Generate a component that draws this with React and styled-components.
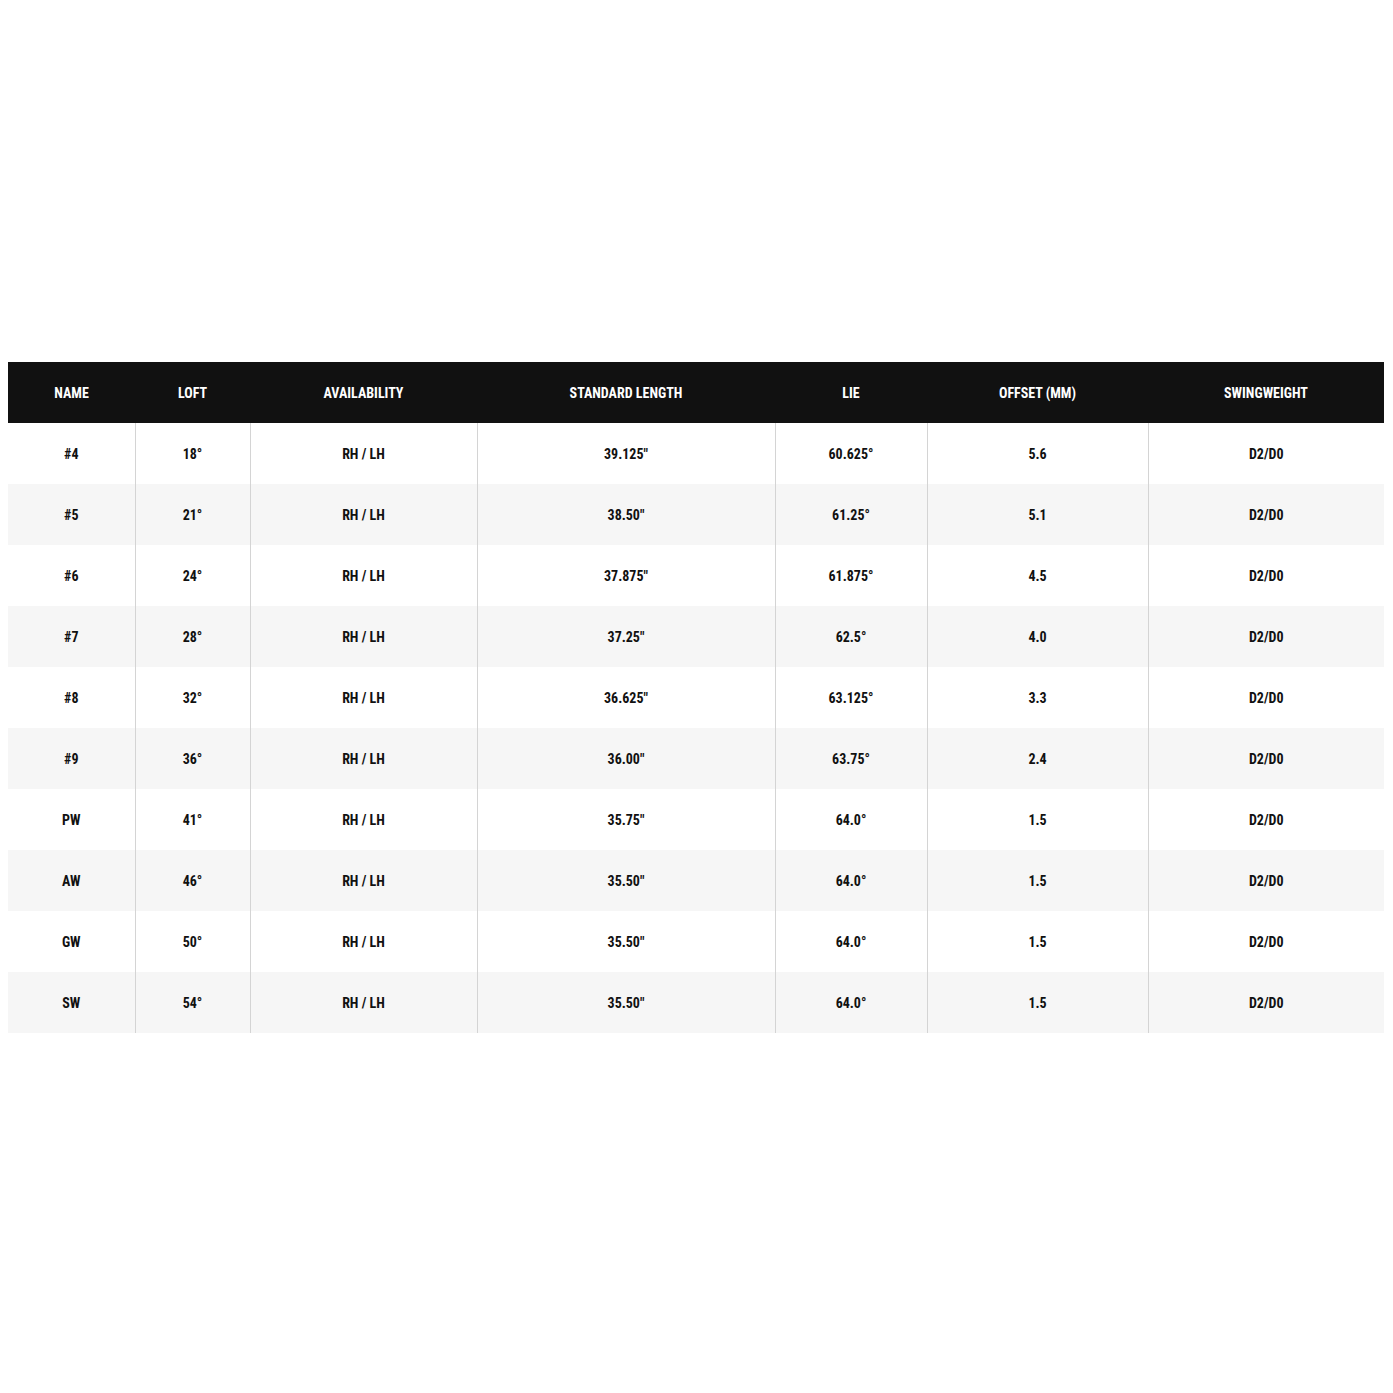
import React from 'react';
import styled, {createGlobalStyle} from "styled-components";

const GlobalStyle = createGlobalStyle`
  html, body { margin: 0; padding: 0; background: #fff; }
  body { font-family: "Roboto Condensed", Roboto, "Liberation Sans", sans-serif; }
`;

const Page = styled.div`
  width: 1393px;height: 1393px;
  display:flex;align-items:center;justify-content:center;
  padding: 2px 9px 0 8px;box-sizing:border-box;
`;

const Table = styled.table`
  width: 1376px;border-collapse: collapse;table-layout: fixed;
  font-weight: 700;font-size: 14px;color: #111;
`;

const Head = styled.th`
  background: #111;color: #fff;height: 61px;padding: 0;
  text-transform: uppercase;font-weight: 700;text-align: center;
`;

const Row = styled.tr`
  background: ${props => props.$alt ? '#f6f6f6' : '#fff'};
`;

const Cell = styled.td`
  height: 61px;padding: 0;text-align: center;
  border-left: 1px solid #d4d4d4;
  &:first-child{ border-left: none; }
`;

const columns = [
    {label: 'Name', width: 127},
    {label: 'Loft', width: 115},
    {label: 'Availability', width: 227},
    {label: 'Standard Length', width: 298},
    {label: 'Lie', width: 152},
    {label: 'Offset (MM)', width: 221},
    {label: 'Swingweight', width: 236},
];

const rows = [
    ['#4', '18°', 'RH / LH', '39.125"', '60.625°', '5.6', 'D2/D0'],
    ['#5', '21°', 'RH / LH', '38.50"', '61.25°', '5.1', 'D2/D0'],
    ['#6', '24°', 'RH / LH', '37.875"', '61.875°', '4.5', 'D2/D0'],
    ['#7', '28°', 'RH / LH', '37.25"', '62.5°', '4.0', 'D2/D0'],
    ['#8', '32°', 'RH / LH', '36.625"', '63.125°', '3.3', 'D2/D0'],
    ['#9', '36°', 'RH / LH', '36.00"', '63.75°', '2.4', 'D2/D0'],
    ['PW', '41°', 'RH / LH', '35.75"', '64.0°', '1.5', 'D2/D0'],
    ['AW', '46°', 'RH / LH', '35.50"', '64.0°', '1.5', 'D2/D0'],
    ['GW', '50°', 'RH / LH', '35.50"', '64.0°', '1.5', 'D2/D0'],
    ['SW', '54°', 'RH / LH', '35.50"', '64.0°', '1.5', 'D2/D0'],
];

const App = () => {
    return (
        <>
            <GlobalStyle/>
            <Page>
                <Table>
                    <colgroup>
                        {columns.map(col => <col key={col.label} style={{width: col.width}}/>)}
                    </colgroup>
                    <thead>
                        <tr>
                            {columns.map(col => <Head key={col.label}>{col.label}</Head>)}
                        </tr>
                    </thead>
                    <tbody>
                        {rows.map((row, i) => (
                            <Row key={row[0]} $alt={i % 2 === 1}>
                                {row.map((value, j) => <Cell key={j}>{value}</Cell>)}
                            </Row>
                        ))}
                    </tbody>
                </Table>
            </Page>
        </>
    );
};

export default App;
